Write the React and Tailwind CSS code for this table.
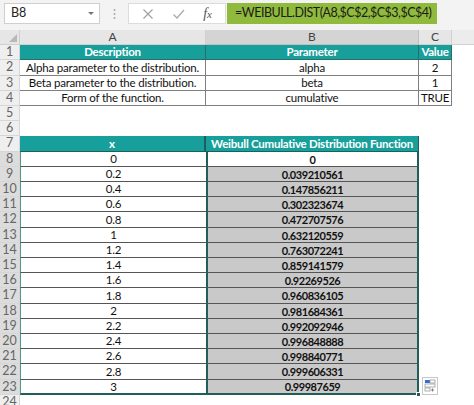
import React from "react";

const xs = ["0","0.2","0.4","0.6","0.8","1","1.2","1.4","1.6","1.8","2","2.2","2.4","2.6","2.8","3"];
const ys = ["0","0.039210561","0.147856211","0.302323674","0.472707576","0.632120559","0.763072241","0.859141579","0.92269526","0.960836105","0.981684361","0.992092946","0.996848888","0.998840771","0.999606331","0.99987659"];

const FONT = { fontFamily: "Lato, 'Liberation Sans', sans-serif" };

function rowH(i) {
  return i % 5 === 2 ? "h-[16px]" : "h-[15px]";
}

function RowHead({ n, sel }) {
  return (
    <div className={`flex items-center justify-center border-r border-b border-[#d6d6d6] text-[12.5px] text-[#666] ${sel ? "bg-[#dcdcdc]" : "bg-[#efefef]"}`}>
      {n}
    </div>
  );
}

function PasteIcon() {
  return (
    <div className="absolute left-[422px] top-[377px] w-[16px] h-[18px] bg-white border border-[#c8c8c8] flex items-center justify-center">
      <svg width="12" height="14" viewBox="0 0 12 14">
        <rect x="1" y="1" width="5" height="3" fill="#2f6fd6" />
        <rect x="6" y="1" width="5" height="3" fill="none" stroke="#9a9a9a" strokeWidth="0.8" />
        <rect x="1" y="5" width="10" height="3" fill="none" stroke="#9a9a9a" strokeWidth="0.8" />
        <rect x="1" y="9" width="5" height="3" fill="none" stroke="#9a9a9a" strokeWidth="0.8" />
        <path d="M8.5 9.5v3M7 11h3" stroke="#777" strokeWidth="0.9" />
      </svg>
    </div>
  );
}

const txt = "text-[11.5px] tracking-[-0.2px] whitespace-nowrap";
const hdr = "text-[11.5px] tracking-[-0.25px] whitespace-nowrap";
const num = "text-[11px] tracking-[-0.45px] whitespace-nowrap";

export default function App() {
  const rows = [];
  for (let i = 1; i <= 23; i++) {
    const h = rowH(i);
    const sel = i >= 8;
    let a = null, b = null, c = null;
    if (i === 1) {
      a = <div className={`flex items-center justify-center bg-[#17a09b] text-white font-bold border-r border-b border-[#2f6b68] ${hdr}`}>Description</div>;
      b = <div className={`flex items-center justify-center bg-[#17a09b] text-white font-bold border-r border-b border-[#2f6b68] ${hdr}`}>Parameter</div>;
      c = <div className={`flex items-center justify-center bg-[#17a09b] text-white font-bold border-r border-b border-[#2f6b68] ${hdr}`}>Value</div>;
    } else if (i >= 2 && i <= 4) {
      const d = [
        ["Alpha parameter to the distribution.", "alpha", "2"],
        ["Beta parameter to the distribution.", "beta", "1"],
        ["Form of the function.", "cumulative", "TRUE"],
      ][i - 2];
      a = <div className={`flex items-center justify-center bg-white text-[#111] border-r border-b border-[#7f7f7f] ${txt}`}>{d[0]}</div>;
      b = <div className={`flex items-center justify-center bg-white text-[#111] border-r border-b border-[#7f7f7f] ${txt}`}>{d[1]}</div>;
      c = <div className={`flex items-center justify-center bg-white text-[#111] border-r border-b border-[#7f7f7f] ${txt}`}>{d[2]}</div>;
    } else if (i === 7) {
      a = <div className={`flex items-center justify-center bg-[#17a09b] text-white font-bold border-r-2 border-b border-[#1f5f5a] ${hdr}`}>x</div>;
      b = <div className={`flex items-center justify-center bg-[#17a09b] text-white font-bold border-r border-b border-[#1f5f5a] ${hdr}`}>Weibull Cumulative Distribution Function</div>;
      c = <div />;
    } else if (i >= 8) {
      const k = i - 8;
      const last = i === 23;
      a = <div className={`flex items-center justify-center bg-white text-[#111] border-l border-l-[#4f9a8c] border-b ${txt} ${last ? "border-b-[#1f5f5a] border-b-2" : "border-b-[#555]"}`}>{xs[k]}</div>;
      b = (
        <div className={`relative flex items-center justify-center font-bold text-[#111] border-x-2 border-[#1f5f5a] border-b ${num} ${k === 0 ? "bg-white" : "bg-[#c9c9c9]"} ${last ? "border-b-2" : "border-b-[#555]"}`}>
          {ys[k]}
          {last && <div className="absolute right-[-4px] bottom-[-4px] w-[5px] h-[5px] bg-[#1f5f5a] border border-white" />}
        </div>
      );
      c = <div />;
    } else {
      a = <div />;
      b = <div />;
      c = <div />;
    }
    rows.push(
      <div key={i} className={`grid grid-cols-[20px_186px_213px_33px_1fr] ${h}`}>
        <RowHead n={i} sel={sel} />
        {a}
        {b}
        {c}
        <div />
      </div>
    );
  }

  return (
    <div className="relative w-[474px] h-[405px] overflow-hidden bg-white text-[12px] leading-none" style={FONT}>
      <div className="h-[30px] bg-[#f3f3f3] flex items-start pt-[3px]">
        <div className="ml-[4px] w-[96px] h-[21px] bg-white border border-[#cfcfcf] flex items-center justify-between pl-[6px] pr-[5px]">
          <span className="text-[12.5px] text-[#222]">B8</span>
          <svg width="6" height="4" viewBox="0 0 6 4"><path d="M0 0h6L3 3z" fill="#777" /></svg>
        </div>
        <div className="w-[28px] h-[21px] flex items-center justify-center">
          <svg width="3" height="12" viewBox="0 0 3 12">
            <circle cx="1.5" cy="2" r="1" fill="#aaa" />
            <circle cx="1.5" cy="6" r="1" fill="#aaa" />
            <circle cx="1.5" cy="10" r="1" fill="#aaa" />
          </svg>
        </div>
        <div className="w-[98px] h-[21px] bg-white border border-[#dcdcdc] flex items-center justify-around px-[4px] text-[#9a9a9a]">
          <svg width="12" height="12" viewBox="0 0 12 12"><path d="M1.5 1.5l9 9M10.5 1.5l-9 9" stroke="#a0a0a0" strokeWidth="1.2" /></svg>
          <svg width="13" height="12" viewBox="0 0 13 12"><path d="M1.5 6.5l3.5 3.5 7-8" stroke="#a8a8a8" strokeWidth="1.2" fill="none" /></svg>
          <span className="italic text-[14px] text-[#555]" style={{ fontFamily: "'Liberation Serif', serif" }}>f<span className="text-[11px]">x</span></span>
        </div>
        <div className="ml-[1px] w-[210px] h-[21px] bg-[#8fba3c] flex items-center pl-[8px] text-[12.5px] tracking-[-0.5px] text-[#1b1b1b] whitespace-nowrap">
          =WEIBULL.DIST(A8,$C$2,$C$3,$C$4)
        </div>
      </div>
      <div className="grid grid-cols-[20px_186px_213px_33px_1fr] h-[15px] text-[12px] text-[#444]">
        <div className="relative bg-[#e6e6e6] border-r border-b border-[#d0d0d0]">
          <svg className="absolute right-[2px] bottom-[2px]" width="8" height="8" viewBox="0 0 8 8"><path d="M8 0v8H0z" fill="#b8b8b8" /></svg>
        </div>
        <div className="flex items-center justify-center bg-[#e6e6e6] border-r border-b border-[#d0d0d0]">A</div>
        <div className="flex items-center justify-center bg-[#d4d4d4] border-r border-b border-[#c0c0c0]">B</div>
        <div className="flex items-center justify-center bg-[#e6e6e6] border-r border-b border-[#d0d0d0]">C</div>
        <div className="bg-[#ececec] border-b border-[#d0d0d0]" />
      </div>
      {rows}
      <div className="grid grid-cols-[20px_186px_213px_33px_1fr] h-[15px]">
        <RowHead n={24} sel={false} />
      </div>
      <PasteIcon />
    </div>
  );
}
